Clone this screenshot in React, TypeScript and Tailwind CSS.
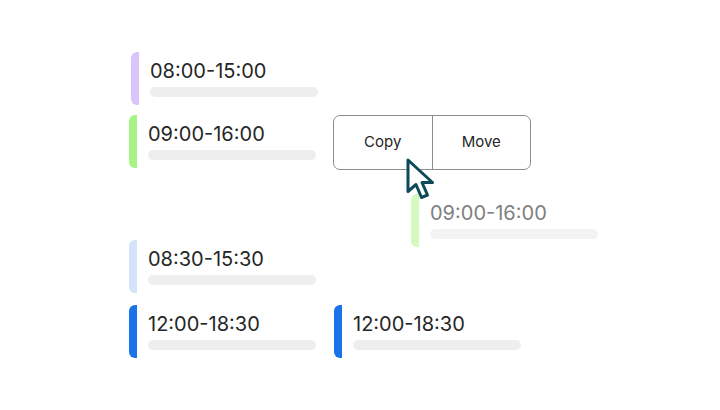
import React from "react";

type CardProps = {
  time: string;
  bar: string;
  text?: string;
  line?: string;
  className?: string;
};

function Card({ time, bar, text = "text-[#262626]", line = "bg-[#eeeeee]", className = "" }: CardProps) {
  return (
    <div className={`flex h-[53px] w-[187px] ${className}`}>
      <div className={`h-full w-[8px] rounded-l-[6px] ${bar}`} />
      <div className="ml-[11px] pt-[5px]">
        <div className={`text-[20px] leading-[28px] ${text}`}>{time}</div>
        <div className={`mt-[2px] h-[10px] w-[168px] rounded-full ${line}`} />
      </div>
    </div>
  );
}

export default function App() {
  return (
    <div
      className="relative h-[410px] w-[720px] overflow-hidden bg-white"
      style={{ fontFamily: "Inter, 'Noto Sans', sans-serif" }}
    >
      <div className="flex flex-col pl-[129px] pt-[52px]">
        <Card time="08:00-15:00" bar="bg-[#d8c5fb]" className="ml-[2px]" />
        <Card time="09:00-16:00" bar="bg-[#a6f483]" className="mt-[10px]" />
        <Card time="08:30-15:30" bar="bg-[#d3e3fb]" className="mt-[72px]" />
        <div className="mt-[12px] flex gap-[18px]">
          <Card time="12:00-18:30" bar="bg-[#1a73e8]" />
          <Card time="12:00-18:30" bar="bg-[#1a73e8]" />
        </div>
      </div>

      {/* dragged ghost card */}
      <div className="absolute left-[411px] top-[194px]">
        <Card
          time="09:00-16:00"
          bar="bg-[#d2fbbd]"
          text="text-[#808080]"
          line="bg-[#f3f3f3]"
        />
      </div>

      {/* context menu */}
      <div className="absolute left-[333px] top-[115px] flex h-[55px] w-[198px] rounded-[7px] border border-[#8c8c8c] bg-white text-[15px] text-[#262626]">
        <div className="flex flex-1 items-center justify-center border-r border-[#8c8c8c]">Copy</div>
        <div className="flex flex-1 items-center justify-center">Move</div>
      </div>

      {/* cursor */}
      <svg
        className="absolute left-[404px] top-[156px]"
        width="34"
        height="46"
        viewBox="0 0 34 46"
      >
        <path
          d="M4 4 L4 35.5 L12 28.5 L17.5 41.5 L23.5 39 L18 26.5 L28.5 26.5 Z"
          fill="#ffffff"
          stroke="#0c4a59"
          strokeWidth="3"
          strokeLinejoin="round"
        />
      </svg>
    </div>
  );
}
